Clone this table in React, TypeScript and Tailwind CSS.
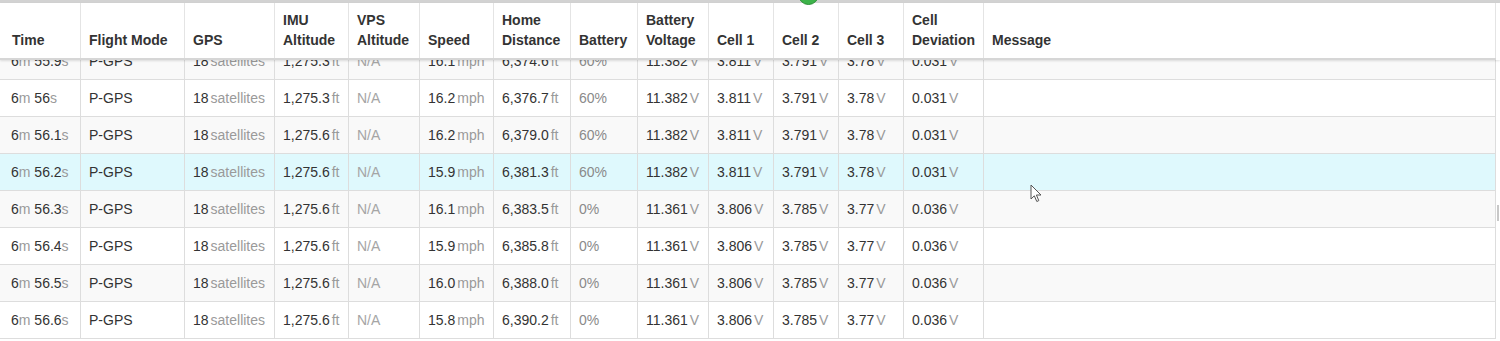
import React from 'react';

type Row = {
  sec: string;
  imu: string;
  speed: string;
  dist: string;
  batt: string;
  bv: string;
  c1: string;
  c2: string;
  c3: string;
  dev: string;
};

const rows: Row[] = [
  { sec: '55.9', imu: '1,275.3', speed: '16.1', dist: '6,374.6', batt: '60%', bv: '11.382', c1: '3.811', c2: '3.791', c3: '3.78', dev: '0.031' },
  { sec: '56', imu: '1,275.3', speed: '16.2', dist: '6,376.7', batt: '60%', bv: '11.382', c1: '3.811', c2: '3.791', c3: '3.78', dev: '0.031' },
  { sec: '56.1', imu: '1,275.6', speed: '16.2', dist: '6,379.0', batt: '60%', bv: '11.382', c1: '3.811', c2: '3.791', c3: '3.78', dev: '0.031' },
  { sec: '56.2', imu: '1,275.6', speed: '15.9', dist: '6,381.3', batt: '60%', bv: '11.382', c1: '3.811', c2: '3.791', c3: '3.78', dev: '0.031' },
  { sec: '56.3', imu: '1,275.6', speed: '16.1', dist: '6,383.5', batt: '0%', bv: '11.361', c1: '3.806', c2: '3.785', c3: '3.77', dev: '0.036' },
  { sec: '56.4', imu: '1,275.6', speed: '15.9', dist: '6,385.8', batt: '0%', bv: '11.361', c1: '3.806', c2: '3.785', c3: '3.77', dev: '0.036' },
  { sec: '56.5', imu: '1,275.6', speed: '16.0', dist: '6,388.0', batt: '0%', bv: '11.361', c1: '3.806', c2: '3.785', c3: '3.77', dev: '0.036' },
  { sec: '56.6', imu: '1,275.6', speed: '15.8', dist: '6,390.2', batt: '0%', bv: '11.361', c1: '3.806', c2: '3.785', c3: '3.77', dev: '0.036' },
];

const headers: string[][] = [
  ['Time'],
  ['Flight Mode'],
  ['GPS'],
  ['IMU', 'Altitude'],
  ['VPS', 'Altitude'],
  ['Speed'],
  ['Home', 'Distance'],
  ['Battery'],
  ['Battery', 'Voltage'],
  ['Cell 1'],
  ['Cell 2'],
  ['Cell 3'],
  ['Cell', 'Deviation'],
  ['Message'],
];

const cols =
  'grid grid-cols-[80px_104px_90px_74px_71px_74px_77px_67px_71px_65px_65px_65px_80px_1fr]';

const Unit = ({ children }: { children: React.ReactNode }) => (
  <span className="ml-[2px] text-[#9a9a9a]">{children}</span>
);

const Cell = ({ i, children }: { i: number; children?: React.ReactNode }) => (
  <div
    className={
      i === 0
        ? 'flex items-center pl-[11px] whitespace-nowrap'
        : i === 13
        ? 'flex items-center pl-2 border-l border-r border-[#dddddd]'
        : 'flex items-center pl-2 border-l border-[#dddddd] whitespace-nowrap'
    }
  >
    {children}
  </div>
);

const DataRow = ({ r, idx }: { r: Row; idx: number }) => {
  const hover = idx === 3;
  const bg = hover ? 'bg-[#dff9fd]' : idx % 2 === 0 ? 'bg-[#f9f9f9]' : 'bg-white';
  return (
    <div className={`${cols} h-[37px] border-b border-[#dddddd] text-[14px] text-[#333] ${bg}`}>
      <Cell i={0}>
        6<span className="text-[#9a9a9a]">m</span>&nbsp;{r.sec}
        <span className="text-[#9a9a9a]">s</span>
      </Cell>
      <Cell i={1}>P-GPS</Cell>
      <Cell i={2}>
        18<Unit>satellites</Unit>
      </Cell>
      <Cell i={3}>
        {r.imu}
        <Unit>ft</Unit>
      </Cell>
      <Cell i={4}>
        <span className="text-[#a5a5a5]">N/A</span>
      </Cell>
      <Cell i={5}>
        {r.speed}
        <Unit>mph</Unit>
      </Cell>
      <Cell i={6}>
        {r.dist}
        <Unit>ft</Unit>
      </Cell>
      <Cell i={7}>
        <span className="text-[#8a8a8a]">{r.batt}</span>
      </Cell>
      <Cell i={8}>
        {r.bv}
        <Unit>V</Unit>
      </Cell>
      <Cell i={9}>
        {r.c1}
        <Unit>V</Unit>
      </Cell>
      <Cell i={10}>
        {r.c2}
        <Unit>V</Unit>
      </Cell>
      <Cell i={11}>
        {r.c3}
        <Unit>V</Unit>
      </Cell>
      <Cell i={12}>
        {r.dev}
        <Unit>V</Unit>
      </Cell>
      <Cell i={13} />
    </div>
  );
};

export default function App() {
  return (
    <div
      className="relative w-[1500px] h-[341px] overflow-hidden bg-white"
      style={{ fontFamily: '"Liberation Sans", Arial, sans-serif' }}
    >
      {/* top strip */}
      <div className="h-[3px] bg-[#d2d2d2]" />

      {/* header */}
      <div className="relative z-10 flex shadow-[0_1px_2px_rgba(0,0,0,0.12)]">
        <div className={`${cols} w-[1496px] h-[57px] bg-white border-b-2 border-[#d6d6d6]`}>
          {headers.map((h, i) => (
            <div
              key={i}
              className={
                'flex flex-col justify-end pb-2 text-[14px] font-bold leading-5 text-[#333] whitespace-nowrap ' +
                (i === 0
                  ? 'pl-[12px]'
                  : i === 13
                  ? 'pl-2 border-l border-r border-[#e4e4e4]'
                  : 'pl-2 border-l border-[#e4e4e4]')
              }
            >
              {h.map((line) => (
                <span key={line}>{line}</span>
              ))}
            </div>
          ))}
        </div>
        <div className="w-[4px] h-[57px] bg-white" />
      </div>

      {/* body */}
      <div className="flex">
        <div className="w-[1496px] overflow-hidden h-[281px]">
          <div className="-mt-[17px]">
            {rows.map((r, idx) => (
              <DataRow key={r.sec} r={r} idx={idx} />
            ))}
          </div>
        </div>
        <div className="w-[4px] pt-[145px]">
          <div className="ml-[1px] w-[2px] h-[16px] bg-[#c8c8c8]" />
        </div>
      </div>

      {/* status dot peeking from above */}
      <div className="absolute left-[798px] -top-[16px] z-20 w-[21px] h-[21px] rounded-full bg-[#3db34a] border border-[#2c8f37]" />

      {/* mouse pointer */}
      <svg
        className="absolute left-[1030px] top-[184px] z-20"
        width="13"
        height="19"
        viewBox="0 0 13 19"
      >
        <path
          d="M1 1 L1 15 L4.3 11.8 L6.8 17.5 L8.8 16.6 L6.4 11 L11 11 Z"
          fill="#ffffff"
          stroke="#555555"
          strokeWidth="1"
          strokeLinejoin="round"
        />
      </svg>
    </div>
  );
}
